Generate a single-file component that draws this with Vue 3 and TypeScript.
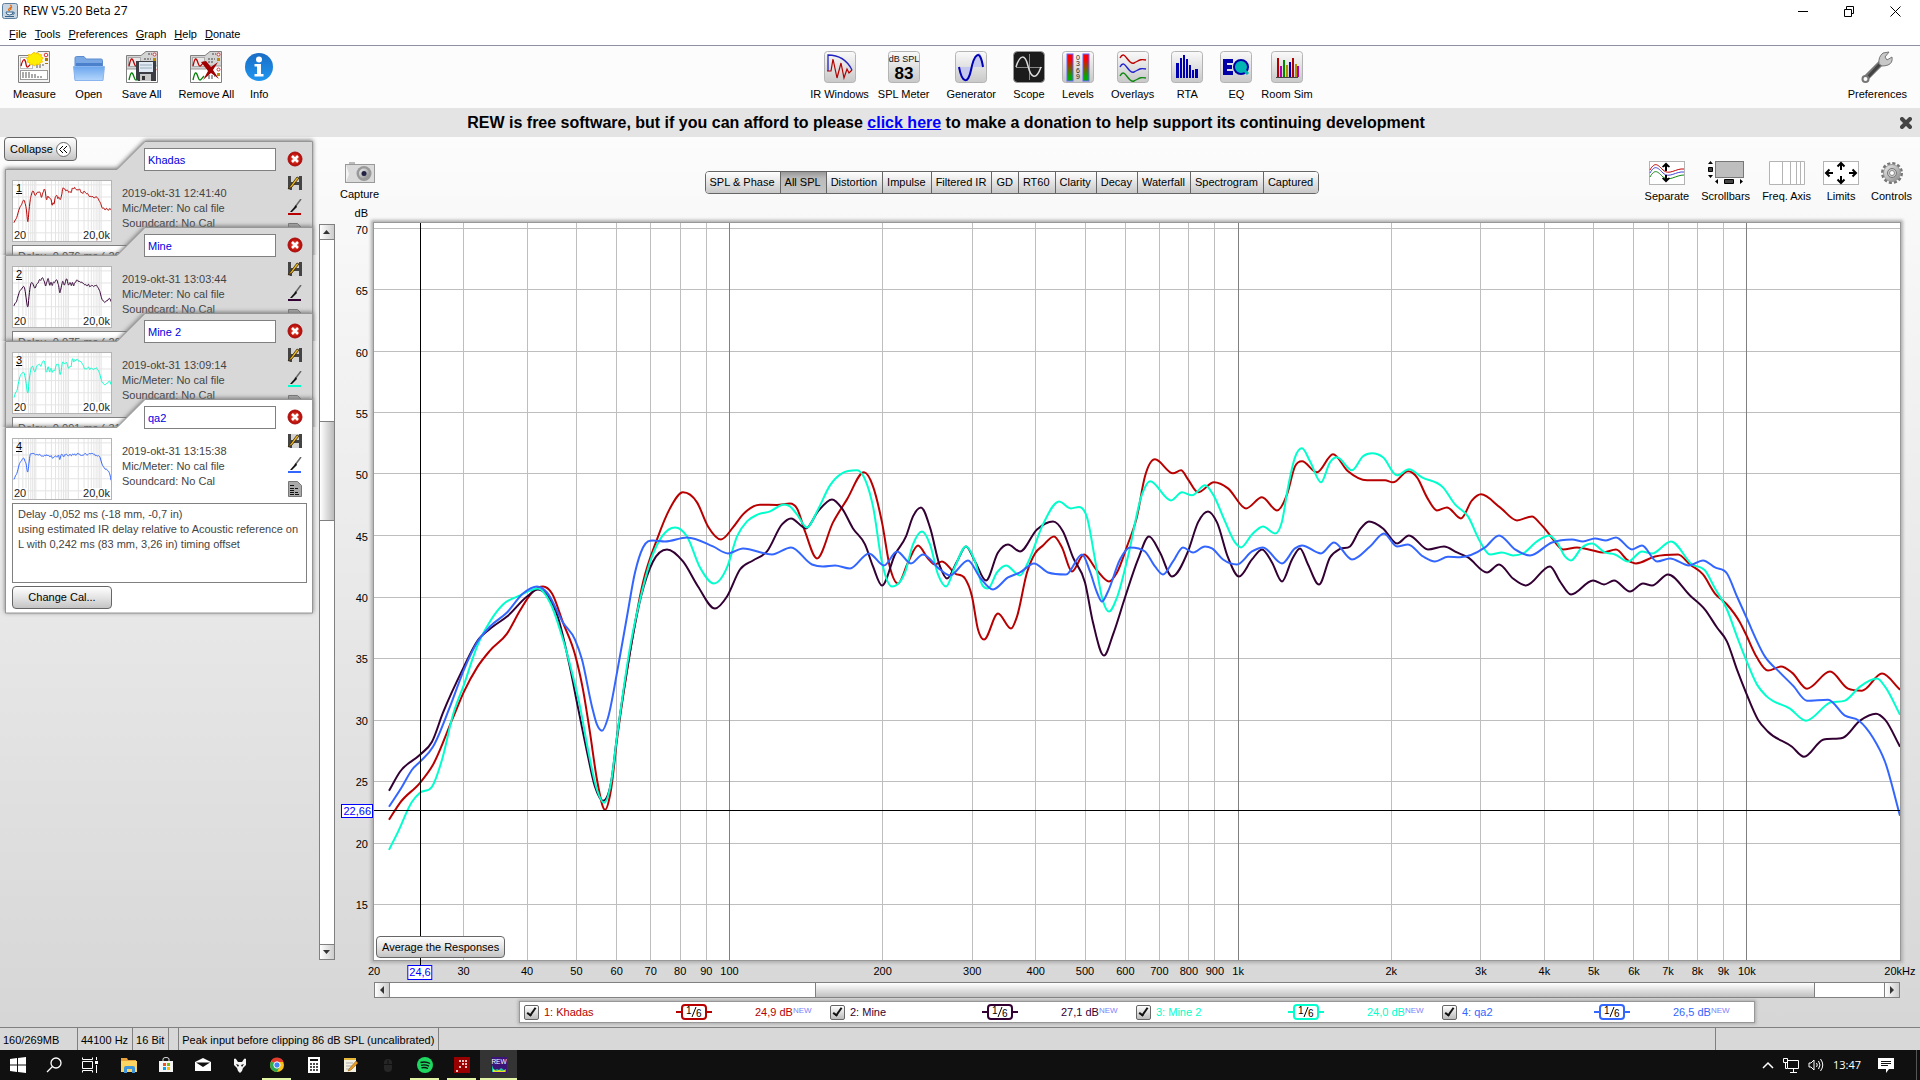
<script setup lang="ts">
import { ref } from 'vue'

interface Trace {
  id: number
  name: string
  color: string
  date: string
  level: string
  notes: string
  points: number[]
}

interface Tool {
  label: string
  icon: string
  tight?: boolean
}

// Trace points are x, y pairs in the plot's own coordinate space.
const PLOT = { x: 374, y: 224, w: 1526, h: 736 }
const DECADE = 508.65
const PER_DB = 12.27

const traces = ref<Trace[]>([
  {
    id: 1, name: 'Khadas', color: '#b80000', date: '2019-okt-31 12:41:40', level: '24,9 dB',
    notes: 'Delay -0,076 ms (-26 mm, -1,0 in)',
    points: [
      389, 820, 400, 803, 420, 783, 433, 765, 453, 718, 464, 692, 477, 668, 490, 651, 507, 634, 520, 611, 533, 592,
      543, 587, 552, 594, 563, 623, 575, 655, 583, 690, 590, 733, 597, 780, 605, 810, 611, 790, 617, 740, 630, 653,
      643, 583, 657, 540, 670, 509, 683, 493, 697, 503, 708, 527, 721, 540, 733, 528, 743, 515, 760, 505.3, 777, 505.6,
      790, 504, 797, 509, 805, 532, 817, 559, 833, 523, 847, 500, 864, 473, 873, 487, 882, 523, 890, 568, 898, 584,
      908, 563, 918, 546, 928, 559, 935, 565, 942, 562, 955, 574, 965, 579, 972, 597, 978, 630, 984, 640, 998, 614,
      1011, 629, 1017, 617, 1027, 573, 1035, 554, 1043, 546, 1054, 537, 1062, 548, 1072, 572, 1084, 555, 1097, 571,
      1109, 582, 1117, 573, 1127, 547, 1137, 517, 1145, 477, 1155, 460, 1173, 474, 1181, 471, 1188, 480, 1198, 493,
      1214, 483, 1228, 489, 1246, 509, 1262, 498, 1277, 511, 1287, 495, 1295, 467, 1302, 462, 1317, 473, 1333, 455,
      1348, 472, 1367, 481, 1385, 481, 1393, 483, 1408, 472, 1417, 478, 1427, 498, 1437, 511, 1447, 508, 1461, 519,
      1472, 501, 1481, 495, 1500, 508, 1517, 521, 1532, 517, 1540, 524, 1547, 532, 1553, 540, 1563, 550, 1577, 548,
      1593, 551, 1603, 553, 1616, 550, 1628, 561, 1636, 564, 1655, 557, 1678, 555, 1690, 565, 1703, 575, 1715, 594,
      1727, 605, 1740, 623, 1746, 635, 1757, 658, 1768, 671, 1781, 667, 1792, 673, 1807, 689, 1830, 672, 1848, 689,
      1862, 691, 1882, 674, 1900, 690,
    ],
  },
  {
    id: 2, name: 'Mine', color: '#330033', date: '2019-okt-31 13:03:44', level: '27,1 dB',
    notes: 'Delay -0,075 ms (-26 mm, -1,0 in)',
    points: [
      389, 791, 400, 772, 420, 755, 432, 742, 443, 713, 464, 667, 477, 642, 493, 627, 507, 617, 527, 597, 538, 590,
      548, 597, 558, 618, 570, 668, 578, 708, 587, 752, 595, 787, 603, 801, 611, 783, 617, 737, 630, 652, 641, 597,
      653, 562, 667, 550, 683, 562, 698, 587, 715, 609, 727, 597, 740, 570, 753, 561, 767, 552, 782, 525, 791, 519,
      806, 529, 818, 512, 832, 500, 842, 509, 853, 529, 865, 545, 873, 567, 882, 586, 895, 555, 906, 537, 913, 517,
      921, 508, 930, 528, 940, 567, 947, 579, 957, 562, 966, 547, 975, 562, 986, 581, 998, 553, 1008, 545, 1020, 552,
      1037, 530, 1053, 522, 1063, 532, 1073, 558, 1085, 583, 1093, 623, 1104, 656, 1113, 635, 1125, 598, 1138, 560,
      1149, 537, 1160, 553, 1172, 577, 1188, 552, 1198, 523, 1208, 512, 1217, 523, 1228, 558, 1239, 577, 1252, 560,
      1262, 550, 1272, 563, 1282, 582, 1292, 560, 1300, 549, 1308, 565, 1319, 585, 1330, 558, 1340, 549.5, 1350, 547,
      1360, 530, 1369, 522, 1383, 529, 1397, 544, 1409, 536, 1428, 550, 1444, 547, 1457, 553, 1468, 558, 1487, 573,
      1499, 565, 1513, 579, 1526, 586, 1550, 567, 1560, 582, 1571, 595, 1593, 581, 1604, 585, 1614, 581, 1630, 592,
      1643, 584, 1652, 586, 1668, 575, 1690, 596, 1705, 610, 1717, 628, 1727, 642, 1737, 670, 1746, 693, 1758, 720,
      1768, 732, 1792, 747, 1804, 757, 1823, 740, 1843, 738, 1860, 721, 1876, 714, 1885, 720, 1900, 747,
    ],
  },
  {
    id: 3, name: 'Mine 2', color: '#00ffcc', date: '2019-okt-31 13:09:14', level: '24,0 dB',
    notes: 'Delay -0,091 ms (-31 mm, -1,2 in)',
    points: [
      389, 850, 398, 832, 412, 802, 420, 793, 432, 787, 442, 760, 453, 715, 464, 685, 477, 647, 490, 622, 503, 605,
      520, 596, 538, 589, 550, 603, 563, 640, 572, 673, 580, 707, 588, 750, 597, 790, 604, 803, 611, 783, 617, 737,
      630, 648, 642, 592, 652, 557, 662, 537, 675, 528, 687, 537, 700, 568, 714, 584, 727, 568, 737, 537, 747, 522,
      758, 515, 770, 512, 784, 505, 790, 507, 797, 515, 807, 528, 818, 510, 830, 486, 842, 474, 857, 471, 865, 480,
      873, 507, 882, 563, 892, 587, 905, 573, 913, 545, 922, 532, 930, 545, 938, 575, 946, 587, 955, 567, 966, 547,
      975, 562, 982, 585, 988, 589, 997, 573, 1006, 566, 1020, 576, 1028, 563, 1043, 525, 1059, 502, 1071, 509,
      1079, 507.5, 1087, 518, 1095, 560, 1102, 598, 1109, 612, 1117, 598, 1128, 557, 1142, 495, 1150, 482, 1171, 501,
      1182, 493, 1192, 496, 1205, 486, 1213, 495, 1225, 522, 1235, 543, 1241, 548, 1252, 535, 1263, 527, 1275, 534,
      1282, 522, 1288, 488, 1295, 458, 1302, 449, 1310, 462, 1321, 483, 1330, 463, 1337, 458, 1352, 471, 1363, 457,
      1372, 454, 1383, 458, 1397, 476, 1409, 470, 1422, 478, 1443, 488, 1455, 505, 1468, 517, 1480, 542, 1490, 555,
      1502, 553, 1513, 556, 1523, 554, 1537, 542, 1549, 536, 1557, 543, 1565, 557, 1571, 561, 1582, 548, 1592, 544,
      1605, 553, 1615, 555, 1628, 562, 1642, 552, 1652, 554, 1671, 542, 1692, 565, 1705, 571, 1715, 589, 1727, 610,
      1737, 637, 1746, 660, 1757, 685, 1767, 697, 1790, 709, 1806, 721, 1830, 703, 1845, 701, 1860, 687, 1877, 679,
      1885, 687, 1900, 715,
    ],
  },
  {
    id: 4, name: 'qa2', color: '#3366ff', date: '2019-okt-31 13:15:38', level: '26,5 dB',
    notes: 'Delay -0,052 ms (-18 mm, -0,7 in)\nusing estimated IR delay relative to Acoustic reference on L with 0,242 ms (83 mm, 3,26 in) timing offset',
    points: [
      389, 807, 402, 787, 412, 770, 420, 762, 433, 747, 450, 707, 464, 670, 477, 643, 490, 627, 507, 613, 523, 594,
      537, 587, 547, 593, 563, 623, 575, 640, 582, 660, 592, 707, 597, 725, 602, 731, 608, 718, 617, 673, 627, 617,
      635, 573, 643, 548, 653, 541, 665, 542, 687, 538, 713, 547, 728, 554, 743, 549, 772, 555, 791, 548, 812, 565,
      823, 567, 835, 566, 850, 569, 869, 554, 884, 566, 897, 552, 911, 564, 923, 555, 940, 570, 950, 576, 968, 561,
      980, 578, 993, 590, 1008, 578, 1020, 573, 1034, 564, 1048, 573, 1066, 575, 1082, 555, 1090, 572, 1097, 593,
      1102, 602, 1108, 592, 1120, 560, 1130, 548, 1145, 552, 1155, 567, 1163, 575, 1173, 562, 1183, 548, 1193, 553,
      1205, 547, 1212, 549, 1223, 560, 1237, 565, 1252, 552, 1263, 548, 1282, 564, 1295, 549, 1302, 546, 1321, 554,
      1334, 543, 1352, 560, 1370, 547, 1384, 534, 1397, 547, 1408, 545, 1423, 557, 1435, 562, 1448, 557.3, 1460, 557.7,
      1485, 548, 1499, 536, 1515, 550, 1530, 556, 1552, 543, 1572, 540, 1583, 542, 1595, 539, 1606, 541, 1616, 538,
      1632, 550, 1642, 546, 1657, 562, 1670, 559, 1689, 566, 1703, 561, 1715, 568, 1727, 574, 1737, 597, 1746, 617,
      1765, 657, 1780, 673, 1793, 686, 1807, 701, 1828, 700, 1845, 716, 1859, 721, 1873, 738, 1885, 762, 1900, 816,
    ],
  },
])

// Piecewise cubic with parabolic tangents, limited so that listed peaks and dips stay extrema.
function curve(p: number[]): string {
  const n = p.length / 2
  const step: number[] = []
  const slope: number[] = []
  for (let i = 0; i < n - 1; i++) {
    step.push(p[2 * i + 2] - p[2 * i])
    slope.push((p[2 * i + 3] - p[2 * i + 1]) / step[i])
  }
  const tangent: number[] = [slope[0]]
  for (let i = 1; i < n - 1; i++) {
    const a = slope[i - 1]
    const b = slope[i]
    if (a * b <= 0) {
      tangent.push(0)
      continue
    }
    const m = (a * step[i] + b * step[i - 1]) / (step[i - 1] + step[i])
    const limit = 3 * Math.min(Math.abs(a), Math.abs(b))
    tangent.push(Math.sign(m) * Math.min(Math.abs(m), limit))
  }
  tangent.push(slope[n - 2])
  let d = `M${p[0]} ${p[1]}`
  for (let i = 0; i < n - 1; i++) {
    const x0 = p[2 * i]
    const y0 = p[2 * i + 1]
    const x1 = p[2 * i + 2]
    const y1 = p[2 * i + 3]
    const h = step[i] / 3
    d += `C${(x0 + h).toFixed(1)} ${(y0 + tangent[i] * h).toFixed(1)} ${(x1 - h).toFixed(1)} ${(y1 - tangent[i + 1] * h).toFixed(1)} ${x1} ${y1}`
  }
  return d
}

const paths = traces.value.map((t) => curve(t.points))
const checked = ref<boolean[]>([true, true, true, true])

const freqX = (f: number): number => PLOT.x + DECADE * Math.log10(f / 20)
const levelY = (db: number): number => 229.5 + (70 - db) * PER_DB
const snap = (v: number): number => Math.floor(v) + 0.5
const left = (x: number): string => `${((x - PLOT.x) / PLOT.w) * 100}%`
const top = (y: number): string => `${((y - PLOT.y) / PLOT.h) * 100}%`

const freqs = [30, 40, 50, 60, 70, 80, 90, 100, 200, 300, 400, 500, 600, 700, 800, 900, 1000,
  2000, 3000, 4000, 5000, 6000, 7000, 8000, 9000, 10000]
const gridX = freqs.map((f) => ({ f, x: snap(freqX(f)), major: [100, 1000, 10000].includes(f) }))
const freqLabels = [20, ...freqs, 20000].map((f) => ({
  x: freqX(f),
  text: f === 20000 ? '20kHz' : f >= 1000 ? `${f / 1000}k` : `${f}`,
}))
const levels = [70, 65, 60, 55, 50, 45, 40, 35, 30, 25, 20, 15]
const gridY = levels.map((db) => ({ db, y: snap(levelY(db)) }))

const menus = ['File', 'Tools', 'Preferences', 'Graph', 'Help', 'Donate']
const tabs = ['SPL & Phase', 'All SPL', 'Distortion', 'Impulse', 'Filtered IR', 'GD', 'RT60', 'Clarity',
  'Decay', 'Waterfall', 'Spectrogram', 'Captured']
const activeTab = ref('All SPL')

const tile = '<rect x=".5" y=".5" width="31" height="31" rx="3" fill="url(#tile)" stroke="#b4b4b4"/>'
const sheets =
  '<path d="M.5 31.500V4.500H15L20 .500H31.500V31.500Z" fill="#d4d4d4" stroke="#808080"/><path d="M1 31V18h15l4-3h11v16z" fill="#fff"/><path d="M1 18h15l4-3h11" fill="none" stroke="#999"/><rect x="2.500" y="6.500" width="12" height="9" fill="#e8e8e8" stroke="#aaa"/><path d="M3 15c2-9 3-9 5-3s3 2 6-1" fill="none" stroke="#c00000" stroke-width="1.300"/><path d="M3 29c2-9 3-9 5-3s3 2 6-1" fill="none" stroke="#008000" stroke-width="1.300"/><path d="M22 3h4M18 8h7M18 11h6M18 25h7M18 27h6" stroke="#444" stroke-dasharray="2 1"/><circle cx="28.500" cy="3.500" r="1.500" fill="#fff" stroke="#d33"/><circle cx="28.500" cy="18.500" r="1.500" fill="#fff" stroke="#d33"/><path d="M27 7h3v3h-3zM27 22h3v3h-3z" fill="#b80"/>'

const fileTools: Tool[] = [
  {
    label: 'Measure',
    icon: '<path d="M.5 31.500V4.500H17L20 .500H31.500V31.500Z" fill="#f4f4f4" stroke="#808080"/><rect x="2.500" y="6.500" width="12" height="11" fill="#fff" stroke="#bbb"/><path d="M3 15c2-8 4-8 5-2s3 2 6-2" fill="none" stroke="#c00000" stroke-width="1.300"/><rect x="2.500" y="19.500" width="27" height="9" fill="#fff" stroke="#999"/><path d="M4 22h9M4 24h14M4 26h20M18 14h8M18 16h6" stroke="#555" stroke-dasharray="2 1"/><circle cx="28" cy="4" r="1.800" fill="#fff" stroke="#d33"/><path d="M27 7h3v3h-3zM27 12h3v1h-3z" fill="#a70"/><path d="M16 1l1.500 2L20 1.500l1 2.500 2.500-.5-.5 2.500 2 1-1.500 2 1 2-2.500.5-.5 2.500-2.500-1L16 15l-1.500-2-2.500 1-.5-2.500L9 11l1-2-1.500-2 2.500-1-.5-2.500L13 4z" fill="#ffee00" stroke="#f8c800"/>',
  },
  {
    label: 'Open',
    icon: '<path d="M2 28V7q0-1.500 1.500-1.500H11L13 8h15q1.500 0 1.500 1.500V28z" fill="#7aa8e4" stroke="#5c8cd0"/><path d="M3 12h26v4H3z" fill="#4a80cc"/><path d="M.5 15.500h31L30 29.500H2z" fill="url(#folder)" stroke="#8ab4ee"/>',
  },
  {
    label: 'Save All',
    icon: sheets + '<path d="M10 10h20v20H12l-2-2z" fill="#3c3c44"/><path d="M13 11h14v10H13z" fill="#dfeaf5"/><path d="M14 14h12M14 17h12" stroke="#9ab"/><path d="M14 23h11v7H14z" fill="#c8c8c8"/><path d="M16 25h3v4h-3z" fill="#333"/>',
  },
  {
    label: 'Remove All',
    icon: sheets + '<path d="M11 11l5-1 5 6 7-5-5 8 6 9-8-6-8 7 5-9z" fill="#a00000"/>',
  },
  {
    label: 'Info', tight: true,
    icon: '<circle cx="16" cy="16" r="14" fill="url(#info)"/><circle cx="16" cy="8.500" r="3" fill="#fff"/><path d="M11.500 13H18v10h2.500v2.500h-9V23H14v-7.500h-2.500z" fill="#fff"/>',
  },
]

const measureTools: Tool[] = [
  {
    label: 'IR Windows',
    icon: tile + '<path d="M4 20V4c10 0 19 5 24 15" fill="none" stroke="#2222c0" stroke-width="1.300"/><path d="M3 20h4L9 8l4 19 4-15 3 15 3-9 2 4 3-3" fill="none" stroke="#b00000" stroke-width="1.200"/>',
  },
  {
    label: 'SPL Meter', tight: true,
    icon: tile + '<text x="16" y="11" font-size="9" text-anchor="middle" fill="#111">dB SPL</text><text x="16" y="28" font-size="17" font-weight="700" text-anchor="middle" fill="#000">83</text>',
  },
  {
    label: 'Generator',
    icon: tile + '<path d="M3 16h25c-1-18-6-18-9-4l-2 9c-4 14-9 12-14-5z" fill="#c4c8ee"/><path d="M4 16c3 16 9 18 12 3S25-4 28 16" fill="none" stroke="#0000b4" stroke-width="2"/>',
  },
  {
    label: 'Scope',
    icon: '<rect x=".5" y=".5" width="31" height="31" rx="4" fill="#1c1c1c" stroke="#999"/><path d="M3 16.500h26M16.500 3v26" stroke="#888"/><path d="M3 16c4-13 9-13 12-1s8 15 13 1" fill="none" stroke="#ddd" stroke-width="1.500"/>',
  },
  {
    label: 'Levels',
    icon: tile + '<rect x="5" y="3" width="6" height="27" fill="url(#meter)" stroke="#6464ff"/><rect x="21" y="3" width="6" height="27" fill="url(#meter)" stroke="#6464ff"/><g font-size="7" text-anchor="middle" fill="#222"><text x="16" y="9">0</text><text x="16" y="15">3</text><text x="16" y="22">6</text><text x="16" y="28">9</text></g>',
  },
  {
    label: 'Overlays',
    icon: tile + '<g fill="none" stroke-width="1.400"><path d="M3 7c5-10 8 8 14 5s6-4 12-3" stroke="#c00000"/><path d="M3 16c5-10 8 8 14 5s6-4 12-3" stroke="#2222d0"/><path d="M3 25c5-10 8 8 14 5s6-4 12-3" stroke="#118811"/></g>',
  },
  {
    label: 'RTA',
    icon: tile + '<path d="M5 12h3v15H5zM9 7h2v20H9zM12 4h2v23h-2zM15 8h2v19h-2zM18 14h2v13h-2zM21 19h2v8h-2zM24 18h3v9h-3z" fill="#0000b0"/>',
  },
  {
    label: 'EQ',
    icon: tile + '<path d="M3 8h10v4H7v2h5v4H7v2h6v4H3z" fill="#0000a8"/><circle cx="21" cy="16" r="7" fill="#00b4b4" stroke="#0000a8" stroke-width="2"/><path d="M23 18l5 5" stroke="#00b4b4" stroke-width="3"/>',
  },
  {
    label: 'Room Sim', tight: true,
    icon: tile + '<g stroke-width="2"><path d="M7 7v19M22 7v19" stroke="#b00000"/><path d="M10 15v11M27 15v11" stroke="#b000b0"/><path d="M13 9v17" stroke="#008800"/><path d="M16 14v12M25 13v13" stroke="#b09000"/><path d="M19 11v15" stroke="#0000c0"/></g><path d="M5 26.500h22" stroke="#444"/>',
  },
]

const graphTools: Tool[] = [
  {
    label: 'Separate',
    icon: '<rect x=".5" y=".5" width="35" height="23" fill="#fff" stroke="#b4b4b4"/><g fill="none"><path d="M1 9c5-9 8-5 13 0 6 6 13-2 21-1" stroke="#c00000"/><path d="M1 12c5-9 8-5 13 0 6 6 13-2 21-1" stroke="#4444dd"/><path d="M1 16c5-9 8-5 13 0 6 5 13-2 21-2" stroke="#118811"/></g><path d="M17 1.500l-4 4 1 1 2-1V10h2V5.500l2 1 1-1zM17 21.500l-4-4 1-1 2 1V14h2v3.500l2-1 1 1z"/>',
  },
  {
    label: 'Scrollbars',
    icon: '<rect x="7.500" y=".5" width="28" height="16" fill="#bebebe" stroke="#777"/><path d="M0 3h5L2.500 0zM0 14h5l-2.500 3zM10 18v5l-3-2.500zM32 18v5l3-2.500z"/><path d="M.5 6.500h4v4h-4zM16.500 18.500h9v4h-9z" fill="#444" stroke="#000"/>',
  },
  {
    label: 'Freq. Axis',
    icon: '<path d="M.5.5h35v23H.5zM13.500 0v24M21.500 0v24M27.500 0v24M31.500 0v24" fill="#fff" stroke="#b4b4b4"/>',
  },
  {
    label: 'Limits',
    icon: '<rect x=".5" y=".5" width="35" height="23" fill="#fff" stroke="#b4b4b4"/><path d="M18 2v7M14.500 5.500L18 2l3.500 3.500M18 22v-7M14.500 18.500L18 22l3.500-3.500M3 12h7M6.500 8.500L3 12l3.500 3.500M33 12h-7M29.500 8.500L33 12l-3.500 3.500" fill="none" stroke="#000" stroke-width="2"/>',
  },
  {
    label: 'Controls',
    icon: '<circle cx="18" cy="12" r="9.500" fill="none" stroke="#777" stroke-width="3" stroke-dasharray="3 1.975"/><circle cx="18" cy="12" r="8.500" fill="url(#metal)" stroke="#999"/><circle cx="18" cy="12" r="4.500" fill="#ccc" stroke="#777"/><circle cx="18" cy="12" r="2.500" fill="#fff" stroke="#888"/>',
  },
]

interface TaskItem { name: string; icon: string; open?: boolean; active?: boolean }
const tasks: TaskItem[] = [
  { name: 'File Explorer', icon: '<path d="M0 1h6l1 2h8v4H0z" fill="#e8a33d"/><path d="M0 4h16v11H0z" fill="#fcd462"/><path d="M3 16v-5q0-2 2-2h7q2 0 2 2v5h-3v-4H6v4z" fill="#3f96d8"/>' },
  { name: 'Microsoft Store', icon: '<path d="M1 4h14v11H1z" fill="#f4f4f4"/><path d="M5 4V2q0-1.500 3-1.500T11 2v2" fill="none" stroke="#ddd"/><path d="M5 6h3v3H5z" fill="#f25022"/><path d="M9 6h3v3H9z" fill="#7fba00"/><path d="M5 10h3v3H5z" fill="#00a4ef"/><path d="M9 10h3v3H9z" fill="#ffb900"/>' },
  { name: 'Mail', icon: '<path d="M0 5l8-4 8 4v9H0z" fill="#fff"/><path d="M1 5.500h14L8 10z" fill="#101010"/>' },
  { name: 'foobar2000', icon: '<path d="M2 2q1-1 2 0l2 3h4l2-3q1-1 2 0v6l-3 3-1 3-2 2-2-2-1-3-3-3z" fill="#f4f4f4"/><path d="M4 7l3 1-1 2zM12 7L9 8l1 2z" fill="#111"/>' },
  { name: 'Chrome', open: true, icon: '<circle cx="8" cy="8" r="7" fill="#fbc116"/><path d="M8 8L2 4a7 7 0 0 1 12.500 1H8z" fill="#e33b2e"/><path d="M2 4.500a7 7 0 0 0 6 10.500l3-6z" fill="#2da94f"/><circle cx="8" cy="8" r="3.200" fill="#4285f4" stroke="#fff"/>' },
  { name: 'Calculator', icon: '<path d="M2 0h12v16H2z" fill="#fff"/><path d="M4 2h8v2H4z" fill="#111"/><path d="M4 7h8M4 10h8M4 13h8" stroke="#111" stroke-width="1.500" stroke-dasharray="2 1"/>' },
  { name: 'Notepad', icon: '<path d="M1 2h12v13H1z" fill="#f4f0e0"/><path d="M1 1h12v2H1z" fill="#e6b83c"/><path d="M3 6h7M3 9h6M3 12h4" stroke="#aaa"/><path d="M6 12L13 4l2 2-7 7-3 1z" fill="#e89b20" stroke="#885510" stroke-width=".5"/>' },
  { name: 'Mouse', icon: '<rect x="4" y="2" width="8" height="13" rx="4" fill="#262626"/><path d="M8 3v4M4 7.500h8" stroke="#111"/>' },
  { name: 'Spotify', open: true, icon: '<circle cx="8" cy="8" r="8" fill="#1ed760"/><path d="M3.500 5.500q5-1.500 9.500 1M4 8.300q4-1.200 8 .8M4.500 10.800q3.500-1 6.500.7" fill="none" stroke="#111" stroke-width="1.400"/>' },
  { name: 'Audio', open: true, icon: '<path d="M0 0h16v16H0z" fill="#990000"/><path d="M5 4h8M8 7h5M11 10h2M5 10h2M2 14h2" stroke="#fff" stroke-width="1.600" stroke-dasharray="2 1"/>' },
  { name: 'REW', open: true, active: true, icon: '<path d="M0 0h16v16H0z" fill="#3c1478"/><text x="8" y="6.500" font-size="6.500" text-anchor="middle" fill="#fff">REW</text><path d="M1 15V8l1 3 2 2 2-1 2 1 2-2 3 2 2-1v3z" fill="#18c8a0"/><path d="M2 15v-3l3 2 3-1 3 1 3-1v2z" fill="#e8e020"/>' },
]
</script>

<template>
  <div class="app">
    <svg class="defs" width="0" height="0" aria-hidden="true">
      <defs>
        <linearGradient id="tile" x2="0" y2="1"><stop stop-color="#fafafa" /><stop offset="1" stop-color="#c8c8c8" /></linearGradient>
        <linearGradient id="folder" x2="0" y2="1"><stop stop-color="#6aa6ee" /><stop offset="1" stop-color="#b4d6fc" /></linearGradient>
        <linearGradient id="info" x2="0" y2="1"><stop stop-color="#1a6cc4" /><stop offset="1" stop-color="#1e96f0" /></linearGradient>
        <linearGradient id="meter" x2="0" y2="1"><stop offset=".2" stop-color="#f00" /><stop offset=".85" stop-color="#0a0" /></linearGradient>
        <linearGradient id="metal" x2="1" y2="1"><stop stop-color="#eee" /><stop offset="1" stop-color="#888" /></linearGradient>
        <radialGradient id="close"><stop stop-color="#f06040" /><stop offset="1" stop-color="#b00000" /></radialGradient>
      </defs>
    </svg>

    <header class="titlebar">
      <svg width="16" height="16" viewBox="0 0 16 16" aria-hidden="true">
        <rect x=".5" y=".5" width="15" height="15" rx="2" fill="#c9d6e2" stroke="#5d7f9e" />
        <path d="M8 2q3 1 0 3t0 3M10 4q-2 1-1 3" fill="none" stroke="#e06a10" stroke-width="1.300" />
        <path d="M4 9h7q0 3-3.500 3T4 9M11 9q2 0 1 2l-1.500.5M3 13.500h9" fill="#f4f8fb" stroke="#38648a" />
      </svg>
      <h1>REW V5.20 Beta 27</h1>
      <button class="win" aria-label="Minimize"><svg width="11" height="11"><path d="M0 5.500h10" stroke="#000" /></svg></button>
      <button class="win" aria-label="Restore"><svg width="11" height="11"><path d="M.5 3.500h7v7h-7zM2.500 3V.500h7v7H8" fill="none" stroke="#000" /></svg></button>
      <button class="win" aria-label="Close"><svg width="11" height="11"><path d="M.5.5l10 10M10.500.5l-10 10" stroke="#000" /></svg></button>
    </header>

    <nav class="menubar">
      <button v-for="m in menus" :key="m"><u>{{ m[0] }}</u>{{ m.slice(1) }}</button>
    </nav>

    <div class="toolbar">
      <div class="tools">
        <button v-for="t in fileTools" :key="t.label" class="tool" :class="{ tight: t.tight }">
          <svg width="32" height="32" v-html="t.icon"></svg>
          <span>{{ t.label }}</span>
        </button>
      </div>
      <div class="tools">
        <button v-for="t in measureTools" :key="t.label" class="tool" :class="{ tight: t.tight }">
          <svg width="32" height="32" v-html="t.icon"></svg>
          <span>{{ t.label }}</span>
        </button>
      </div>
      <div class="tools">
        <button class="tool">
          <svg width="32" height="32">
            <path d="M4 28L20 12" stroke="#777" stroke-width="6" stroke-linecap="round" />
            <path d="M8 25L20 12" stroke="#444" stroke-width="3" stroke-linecap="round" />
            <path d="M18 13q-1-7 4-11l6-1-4 5 2 3 5-3q1 6-4 8-3 1-6 1z" fill="#c8c8c8" stroke="#777" />
            <circle cx="4.500" cy="28" r="3" fill="#fff" stroke="#777" stroke-width="2" />
          </svg>
          <span>Preferences</span>
        </button>
      </div>
    </div>

    <div class="banner">
      <p>REW is free software, but if you can afford to please <a href="#donate">click here</a> to make a donation to help support its continuing development</p>
      <button aria-label="Close message">
        <svg width="12" height="12"><path d="M2 2l8 8M10 2l-8 8" stroke="#444" stroke-width="4" stroke-linecap="round" /></svg>
      </button>
    </div>

    <div class="workspace">
      <aside class="sidebar">
        <button class="push collapse">
          Collapse
          <svg width="15" height="15"><circle cx="7.500" cy="7.500" r="7" fill="#fff" stroke="#666" /><path d="M7 4L3.500 7.500 7 11M11 4L7.500 7.500 11 11" fill="none" stroke="#000" /></svg>
        </button>
        <div class="stack">
          <section v-for="(t, i) in traces" :key="t.id" class="card" :class="{ current: t.id === 4 }">
            <svg class="shape" width="308" :height="t.id === 4 ? 215 : 115" aria-hidden="true">
              <path :d="`M.5 28.500H112L140 .500H307.500V${t.id === 4 ? 214 : 120}H.5Z`" :fill="t.id === 4 ? '#fff' : '#d8d8d8'" stroke="#969696" stroke-width="1" />
            </svg>
            <div class="fields">
              <input v-model="t.name" class="name" :aria-label="`Name of measurement ${t.id}`" />
              <div class="summary">
                <div class="thumb">
                  <svg viewBox="374 390 1526 619" preserveAspectRatio="none" aria-hidden="true">
                    <path class="tgrid" d="M374 430H1900M374 555H1900M374 675H1900M374 800H1900M374 925H1900" />
                    <path class="tgrid" :d="gridX.map((g) => `M${g.x} 390V1009`).join('')" />
                    <path class="tline" :d="paths[i]" :stroke="t.color" />
                  </svg>
                  <b>{{ t.id }}</b>
                  <span>20</span><span>20,0k</span>
                </div>
                <p>{{ t.date }}<br />Mic/Meter: No cal file<br />Soundcard: No Cal</p>
              </div>
              <textarea v-model="t.notes" spellcheck="false" :aria-label="`Notes for measurement ${t.id}`"></textarea>
              <button v-if="t.id === 4" class="push cal">Change Cal...</button>
            </div>
            <div class="actions">
              <button aria-label="Remove">
                <svg width="16" height="16"><circle cx="8" cy="8" r="7" fill="url(#close)" stroke="#a81010" /><path d="M5 5l6 6M11 5l-6 6" stroke="#fff" stroke-width="2.500" /></svg>
              </button>
              <button aria-label="Save">
                <svg width="16" height="16"><path d="M1 1h14v14H3l-2-2z" fill="#444" /><path d="M4 1h8v6H4zM5 10h7v5H5z" fill="#d4d4d4" /><path d="M10 2L4 10l-3 4 4-2 7-9z" fill="#e8b820" stroke="#221100" stroke-width=".7" /></svg>
              </button>
              <button aria-label="Trace colour">
                <svg width="16" height="16"><path d="M14 0L8 8" stroke="#666" stroke-width="1.500" /><path d="M9 6l-6 7h2l5-5z" fill="#111" /><path d="M1 15h13" :stroke="t.color" stroke-width="2" /></svg>
              </button>
              <button aria-label="Notes">
                <svg width="16" height="16"><path d="M1.500.5h9l4 4v11h-13z" fill="#aaa" stroke="#777" /><path d="M3 4.500h4M3 7.500h8M3 9.500h5M3 11.500h8M3 13.500h9" stroke="#111" stroke-dasharray="4 1" /></svg>
              </button>
            </div>
          </section>
        </div>
        <div class="vscroll">
          <button aria-label="Scroll up"><svg width="14" height="14"><path d="M3 9h7L6.500 5z" fill="#333" /></svg></button>
          <div class="vtrack"><div class="vthumb"></div></div>
          <button aria-label="Scroll down"><svg width="14" height="14"><path d="M3 5h7L6.500 9z" fill="#333" /></svg></button>
        </div>
      </aside>

      <main class="graph">
        <div class="graph-head">
          <button class="tool capture">
            <svg width="30" height="22"><rect x="4" width="6" height="4" fill="#bbb" /><rect x=".5" y="2.500" width="29" height="18" fill="#dadada" stroke="#999" /><path d="M1 3l3 9-3 8z" fill="#f4f4f4" /><circle cx="19" cy="11.500" r="7.500" fill="#999" /><circle cx="19" cy="11.500" r="5" fill="url(#metal)" /><circle cx="19" cy="11.500" r="2.500" fill="#222244" /></svg>
            <span>Capture</span>
          </button>
          <div class="tabs" role="tablist">
            <button v-for="t in tabs" :key="t" role="tab" :aria-selected="t === activeTab" :class="{ on: t === activeTab }" @click="activeTab = t">{{ t }}</button>
          </div>
          <div class="tools graph-tools">
            <button v-for="t in graphTools" :key="t.label" class="tool">
              <svg width="36" height="24" v-html="t.icon"></svg>
              <span>{{ t.label }}</span>
            </button>
          </div>
        </div>

        <div class="plot-row">
          <div class="y-axis">
            <span class="unit">dB</span>
            <span v-for="g in gridY" :key="g.db" :style="{ top: top(g.y + 1) }">{{ g.db }}</span>
            <output :style="{ top: top(811) }">22,66</output>
          </div>
          <div class="plot">
            <svg :viewBox="`${PLOT.x} ${PLOT.y} ${PLOT.w} ${PLOT.h}`" preserveAspectRatio="none" role="img" aria-label="SPL against frequency">
              <line v-for="g in gridY" :key="g.db" class="grid" :x1="PLOT.x" :x2="PLOT.x + PLOT.w" :y1="g.y" :y2="g.y" />
              <line v-for="g in gridX" :key="g.f" class="grid" :class="{ major: g.major }" :x1="g.x" :x2="g.x" :y1="PLOT.y" :y2="PLOT.y + PLOT.h" />
              <template v-for="(t, i) in traces" :key="t.id">
                <path v-if="checked[i]" class="trace" :d="paths[i]" :stroke="t.color" />
              </template>
              <path class="cursor" d="M420.500 224V960M374 810.500H1900" />
            </svg>
            <button class="push average">Average the Responses</button>
          </div>
        </div>

        <div class="x-axis">
          <span v-for="f in freqLabels" :key="f.text" :style="{ left: left(f.x) }">{{ f.text }}</span>
          <i :style="{ left: left(420) }"></i>
          <output :style="{ left: left(420) }">24,6</output>
        </div>

        <div class="hscroll">
          <button aria-label="Scroll left"><svg width="14" height="14"><path d="M9 3v8L5 7z" fill="#333" /></svg></button>
          <div class="htrack"><div class="hthumb"></div></div>
          <button aria-label="Scroll right"><svg width="14" height="14"><path d="M5 3v8l4-4z" fill="#333" /></svg></button>
        </div>

        <div class="legend">
          <div v-for="(t, i) in traces" :key="t.id" class="entry" :style="{ color: t.color }">
            <label><input v-model="checked[i]" type="checkbox" />{{ t.id }}: {{ t.name }}</label>
            <svg width="36" height="16" aria-hidden="true">
              <path d="M0 8h6M30 8h6" :stroke="t.color" stroke-width="2" />
              <rect x="6" y="1" width="24" height="14" rx="3" fill="#fff" :stroke="t.color" stroke-width="2" />
              <text x="10" y="10" font-size="10" fill="#000">1</text>
              <path d="M16 13l4-10" stroke="#000" />
              <text x="20" y="13" font-size="10" fill="#000">6</text>
            </svg>
            <span class="level">{{ t.level }}<small>NEW</small></span>
          </div>
        </div>
      </main>
    </div>

    <footer class="status">
      <span class="mem">160/269MB</span>
      <span>44100 Hz</span>
      <span>16 Bit</span>
      <span class="gap"></span>
      <span>Peak input before clipping 86 dB SPL (uncalibrated)</span>
      <span class="rest"></span>
    </footer>

    <div class="taskbar">
      <button class="sys" aria-label="Start"><svg width="16" height="16"><path d="M0 2l7-1v6.500H0zM8 1l8-1v7.500H8zM0 8.500h7V15l-7-1zM8 8.500h8V16l-8-1z" fill="#fff" /></svg></button>
      <button class="sys" aria-label="Search"><svg width="16" height="16"><circle cx="10" cy="6" r="5" fill="none" stroke="#fff" stroke-width="1.300" /><path d="M6.500 9.500L1 15" stroke="#fff" stroke-width="1.300" /></svg></button>
      <button class="sys view" aria-label="Task view"><svg width="16" height="16"><path d="M.5 4.500h10v7H.5zM.5 2.500V.500M.5 2.500h10V.500M.5 15.500v-2h10v2M14.500 0v3M14.500 8v8" fill="none" stroke="#fff" /><path d="M13 4h3v3h-3z" fill="#fff" /></svg></button>
      <button v-for="t in tasks" :key="t.name" class="task" :class="{ open: t.open, active: t.active }" :aria-label="t.name">
        <svg width="16" height="16" v-html="t.icon"></svg>
      </button>
      <div class="tray">
        <svg width="12" height="12"><path d="M1 9l5-5 5 5" fill="none" stroke="#fff" stroke-width="1.500" /></svg>
        <svg width="16" height="16"><path d="M4.500 3.500h11v8h-11zM10.500 12v3M7 15.500h7M.5 1.500h4v4h-4zM2.500 6v5.500H4" fill="none" stroke="#fff" /></svg>
        <svg width="16" height="16"><path d="M1 6h2l3-3v10l-3-3H1zM8.500 6q1.500 2 0 4M10.500 4q3 4 0 8M12.500 2q4.500 6 0 12" fill="none" stroke="#fff" /></svg>
        <time>13:47</time>
        <svg class="note" width="16" height="16"><path d="M0 1h16v11h-5l-3 4v-4H0z" fill="#fff" /><path d="M3 4.500h10M3 6.500h10M3 8.500h7" stroke="#111" /></svg>
      </div>
    </div>
  </div>
</template>

<style>
body {
  margin: 0;
}
</style>

<style scoped>
.app {
  display: flex;
  flex-direction: column;
  min-height: 100vh;
  background: #fff;
  color: #000;
  font: 11px/15px "Liberation Sans", Arial, sans-serif;
}
.defs {
  position: absolute;
}
svg {
  display: block;
  flex: none;
}
button {
  margin: 0;
  padding: 0;
  border: 0;
  background: none;
  color: inherit;
  font: inherit;
  white-space: nowrap;
}
.titlebar {
  display: flex;
  align-items: center;
  height: 22px;
  padding: 0 2px;
}
.titlebar h1 {
  flex: 1;
  margin: 0 0 0 5px;
  font: 12px/16px "Open Sans", sans-serif;
}
.win {
  display: flex;
  justify-content: center;
  width: 46px;
}
.menubar {
  display: flex;
  gap: 8px;
  box-sizing: border-box;
  height: 24px;
  padding: 1px 0 0 9px;
  border-bottom: 1px solid #9090a4;
}
.toolbar {
  display: flex;
  justify-content: space-between;
  height: 57px;
  padding: 5px 13px 0;
  background: #fcfcfc;
}
.tools {
  display: flex;
  gap: 17px;
}
.tool {
  display: flex;
  flex-direction: column;
  align-items: center;
  gap: 4px;
  height: 51px;
}
.tight {
  margin-left: -8px;
}
.banner {
  display: flex;
  align-items: center;
  height: 29px;
  background: #e4e4e4;
}
.banner p {
  flex: 1;
  margin: 0;
  font-size: 16px;
  font-weight: 700;
  line-height: 20px;
  text-align: center;
}
.banner a {
  color: #0000ff;
}
.banner button {
  width: 28px;
  padding-left: 8px;
}
.workspace {
  display: flex;
  flex: 1;
  background: linear-gradient(#fcfcfc, #d6d6d6);
}
.push {
  border: 1px solid #666;
  border-radius: 4px;
  background: linear-gradient(#fff, #e4e4e4 50%, #c4c4c4);
}
.sidebar {
  display: grid;
  grid-template-columns: 315px 16px;
  padding-left: 4px;
}
.collapse {
  grid-area: 1 / 1;
  z-index: 1;
  display: flex;
  align-items: center;
  justify-content: space-between;
  align-self: start;
  width: 73px;
  height: 24px;
  padding: 0 5px;
}
.stack {
  grid-area: 1 / 1;
  padding: 4px 0 0 1px;
}
.card {
  position: relative;
  display: flex;
  width: 308px;
  height: 114px;
  margin-bottom: -28px;
  clip-path: inset(-6px -6px 0 -6px);
}
.card.current {
  height: 215px;
  margin-bottom: 0;
  clip-path: none;
}
.shape {
  position: absolute;
  inset: 0;
  overflow: visible;
  filter: drop-shadow(0 -1px 2px #777);
}
.fields {
  position: relative;
  display: flex;
  flex-direction: column;
  box-sizing: border-box;
  width: 282px;
  padding: 7px 0 0 7px;
}
.name {
  box-sizing: border-box;
  flex: none;
  align-self: flex-end;
  width: 132px;
  height: 23px;
  margin-right: 11px;
  padding: 0 3px;
  border: 1px solid #808080;
  background: #fff;
  color: #0000e0;
  font: inherit;
}
.summary {
  display: flex;
  flex: none;
  margin-top: 9px;
}
.thumb {
  position: relative;
  display: flex;
  justify-content: space-between;
  align-items: flex-end;
  box-sizing: border-box;
  width: 100px;
  height: 62px;
  border: 1px solid #b4b4b4;
  background: #fff;
  line-height: 11px;
  color: #222;
}
.thumb svg {
  position: absolute;
  inset: 0;
  width: 100%;
  height: 100%;
}
.thumb b {
  position: absolute;
  top: 2px;
  left: 3px;
  color: #000;
  font-weight: 400;
  text-decoration: underline;
}
.thumb span {
  position: relative;
  padding: 0 1px;
  background: #fff;
}
.tgrid,
.tline {
  fill: none;
  vector-effect: non-scaling-stroke;
}
.tgrid {
  stroke: #e4e4e4;
}
.tline {
  stroke-width: 1px;
}
.summary p {
  margin: 6px 0 0 10px;
  color: #444;
  white-space: nowrap;
}
textarea {
  box-sizing: border-box;
  flex: none;
  width: 295px;
  height: 80px;
  margin: 3px 0;
  padding: 3px 5px;
  border: 1px solid #808080;
  background: #fff;
  color: #444;
  font: inherit;
  resize: none;
  overflow: hidden;
}
.cal {
  width: 100px;
  height: 23px;
}
.actions {
  position: relative;
  display: flex;
  flex-direction: column;
  align-items: flex-start;
  gap: 8px;
  height: 90px;
  padding-top: 10px;
}
.actions button {
  width: 16px;
}
.vscroll {
  display: flex;
  grid-column: 2;
  flex-direction: column;
  margin: 87px 0 67px;
  border: 1px solid #808080;
  background: #fff;
}
.vscroll button,
.hscroll button {
  background: linear-gradient(90deg, #fff, #ccc);
}
.vtrack {
  display: grid;
  flex: 1;
  grid-template-rows: 180fr 100fr 422fr;
  border: solid #808080;
  border-width: 1px 0;
}
.vthumb {
  grid-row: 2;
  border: solid #808080;
  border-width: 1px 0;
  background: linear-gradient(90deg, #fff, #bbb);
}
.graph {
  display: flex;
  flex: 1;
  flex-direction: column;
  min-width: 0;
  padding: 0 20px 4px 39px;
}
.graph-head {
  display: flex;
  justify-content: space-between;
  align-items: flex-start;
  height: 86px;
  margin: 0 -12px 0 -34px;
}
.capture {
  gap: 3px;
  padding-top: 25px;
}
.tabs {
  display: flex;
  margin-top: 34px;
  border: 1px solid #666;
  border-radius: 4px;
  overflow: hidden;
}
.tabs button {
  height: 21px;
  padding: 0 5px 0 4px;
  background: linear-gradient(#fff, #e4e4e4 50%, #c8c8c8);
}
.tabs button + button {
  border-left: 1px solid #666;
}
.tabs .on {
  background: linear-gradient(#999, #bbb 30%, #c4c4c4);
}
.graph-tools {
  gap: 12px;
  padding-top: 24px;
}
.graph-tools .tool {
  min-width: 36px;
}
.plot-row {
  display: flex;
  flex: 1;
  margin-left: -39px;
}
.y-axis {
  position: relative;
  width: 39px;
}
.y-axis span,
.y-axis output {
  position: absolute;
  right: 6px;
  line-height: 14px;
  transform: translateY(-50%);
}
.y-axis .unit {
  top: -10px;
}
.y-axis output {
  right: 1px;
  z-index: 1;
  line-height: 12px;
}
output {
  padding: 0 1px;
  border: 1px solid #0000ff;
  background: #fff;
  color: #0000ff;
}
.plot {
  position: relative;
  flex: 1;
  background: #fff;
  box-shadow: 0 0 0 1px #989898, 0 0 3px 3px #b0b0b0;
}
.plot svg {
  position: absolute;
  inset: 0;
  width: 100%;
  height: 100%;
}
.grid {
  stroke: #bebebe;
  shape-rendering: crispEdges;
}
.major {
  stroke: #808080;
}
.trace {
  fill: none;
  stroke-width: 2px;
  vector-effect: non-scaling-stroke;
}
.cursor {
  fill: none;
  stroke: #000;
  shape-rendering: crispEdges;
}
.average {
  position: absolute;
  bottom: 2px;
  left: 2px;
  height: 22px;
  padding: 0 5px;
}
.x-axis {
  position: relative;
  height: 22px;
}
.x-axis span,
.x-axis output {
  position: absolute;
  top: 5px;
  line-height: 13px;
  transform: translateX(-50%);
}
.x-axis i {
  position: absolute;
  width: 1px;
  height: 6px;
  background: #000;
}
.hscroll {
  display: flex;
  border: 1px solid #808080;
  background: #fff;
}
.htrack {
  display: grid;
  flex: 1;
  grid-template-columns: 425fr 1000fr 69fr;
  border: solid #808080;
  border-width: 0 1px;
}
.hthumb {
  grid-column: 2;
  border: solid #808080;
  border-width: 0 1px;
  background: linear-gradient(#fff, #c0c0c0);
}
.legend {
  display: flex;
  align-self: center;
  height: 20px;
  margin: 4px 0 1px;
  padding: 0 6px 0 4px;
  background: #fff;
  box-shadow: 0 0 0 1px #989898, 0 0 3px 2px #aaa;
}
.entry {
  display: flex;
  align-items: center;
  width: 306px;
}
.entry label {
  display: flex;
  align-items: center;
  gap: 5px;
  width: 152px;
}
.entry input {
  appearance: none;
  box-sizing: border-box;
  width: 15px;
  height: 15px;
  margin: 0;
  border: 1px solid #666;
  border-radius: 2px;
  background: linear-gradient(#fff, #bbb);
}
.entry input:checked::after {
  content: "";
  display: block;
  width: 3px;
  height: 8px;
  margin: 0 0 0 4px;
  border: solid #111;
  border-width: 0 2px 2px 0;
  transform: rotate(35deg);
}
.level {
  margin-left: 43px;
}
.level small {
  color: #8080ff;
  font-size: 8px;
  line-height: 9px;
  vertical-align: 3px;
}
.status {
  display: flex;
  height: 22px;
  border-top: 1px solid #808080;
  background: #d8d8d8;
  line-height: 24px;
}
.status span {
  padding: 0 4px 0 3px;
  border-right: 1px solid #808080;
}
.status .mem {
  width: 70px;
}
.status .gap {
  padding: 0 9px 0 0;
}
.status .rest {
  flex: 1;
  margin-right: 204px;
}
.taskbar {
  display: flex;
  align-items: stretch;
  height: 30px;
  background: #101010;
  color: #fff;
}
.taskbar button {
  display: flex;
  align-items: center;
  justify-content: center;
}
.sys {
  width: 36px;
}
.view {
  margin-right: 2px;
}
.task {
  position: relative;
  box-sizing: border-box;
  width: 37px;
}
.active {
  background: #343434;
}
.open::after {
  content: "";
  position: absolute;
  right: 4px;
  bottom: 0;
  left: 4px;
  height: 2px;
  background: #e2f5a4;
}
.active::after {
  right: 0;
  left: 0;
}
.tray {
  display: flex;
  align-items: center;
  gap: 9px;
  margin: 0 3px 0 auto;
  padding-right: 22px;
  border-right: 1px solid #555;
}
.tray time {
  font: 11px/16px "Open Sans", sans-serif;
}
.note {
  margin-left: 8px;
}
</style>
